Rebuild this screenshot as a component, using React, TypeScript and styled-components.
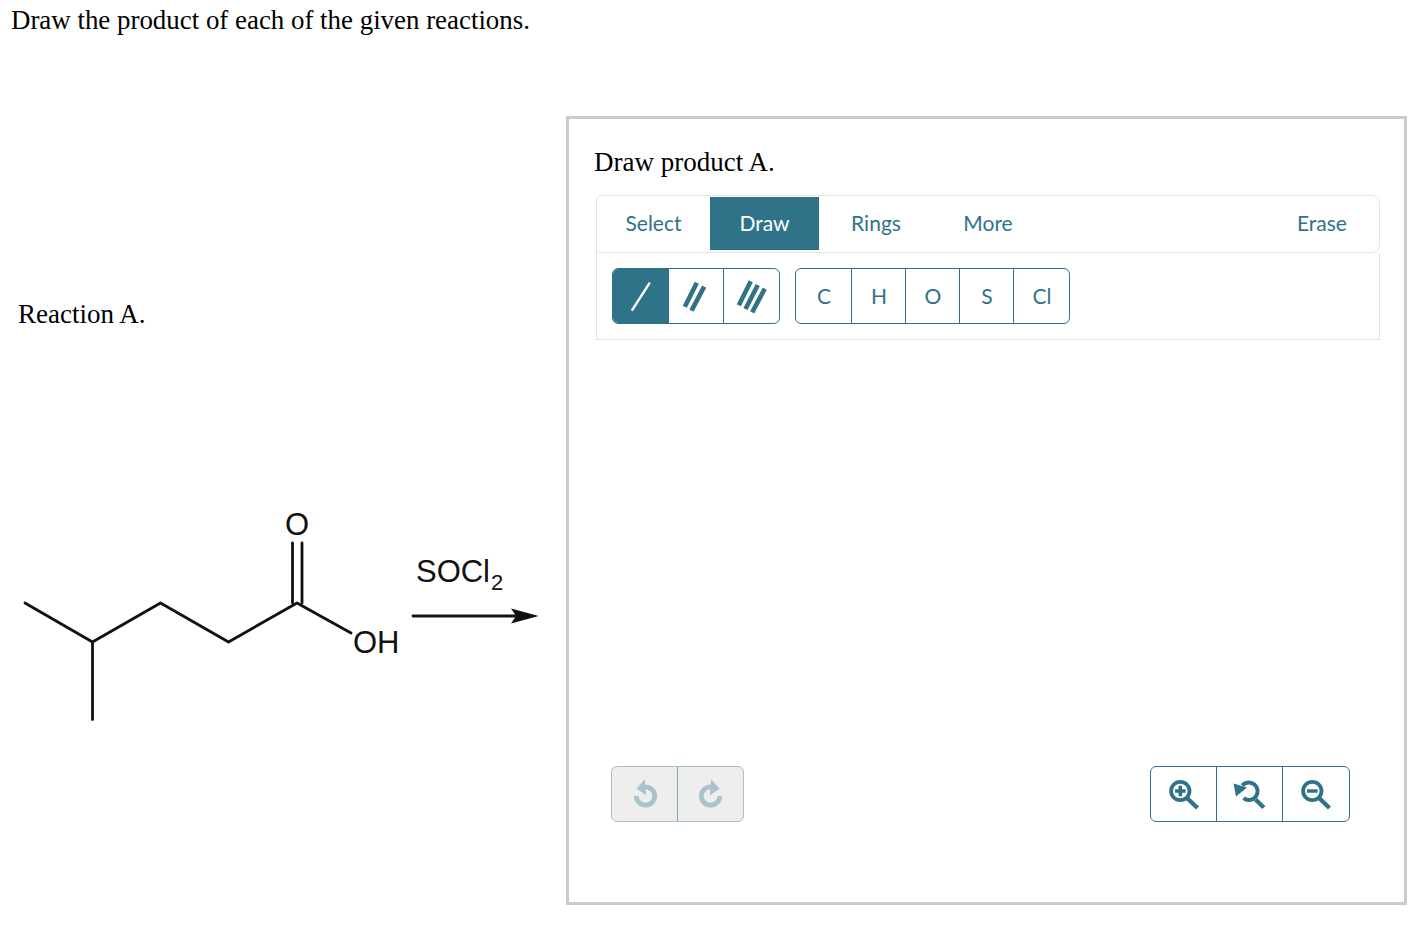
import styled, {createGlobalStyle} from 'styled-components';

const teal = '#2f7389';
const serif = '"Liberation Serif", "Times New Roman", serif';

const GlobalStyle = createGlobalStyle`
  html, body {
    margin: 0;
    padding: 0;
    background: #fff;
    color: #000;
    font-family: ${serif};
  }
`

const Page = styled.div`
  box-sizing: border-box;
  width: 1426px;
  height: 936px;
  padding-left: 11px;
  overflow: hidden;
`

const Heading = styled.div`
  height: 41px;
  line-height: 41px;
  font-size: 26.9px;
`

const Columns = styled.div`
  display: flex;
  margin-top: 75px;
`

const LeftColumn = styled.div`
  width: 555px;
  flex: none;
`

const ReactionLabel = styled.div`
  margin: 181px 0 0 7px;
  height: 34px;
  line-height: 35px;
  font-size: 27px;
`

const Drawing = styled.svg`
  display: block;
  margin-top: 169px;
`

const Panel = styled.div`
  box-sizing: border-box;
  width: 841px;
  height: 789px;
  border: 3px solid #cbcbcb;
  padding: 0 24px 0 27px;
`

const PanelTitle = styled.div`
  height: 76px;
  line-height: 87px;
  margin-left: -2px;
  font-size: 27px;
`

const TabBar = styled.div`
  box-sizing: border-box;
  display: flex;
  height: 58px;
  padding: 1px 0;
  border: 1px solid #e3e3e3;
  border-radius: 6px 8px 8px 0;
  font-family: Lato, sans-serif;
`

const Tab = styled.div<{$width: number; $active?: boolean; $push?: boolean}>`
  display: flex;
  align-items: center;
  justify-content: center;
  width: ${p => p.$width}px;
  margin-left: ${p => (p.$push ? 'auto' : 0)};
  margin-bottom: 1px;
  padding-bottom: 3px;
  box-sizing: border-box;
  font-size: 21px;
  color: ${p => (p.$active ? '#fff' : teal)};
  background: ${p => (p.$active ? teal : 'transparent')};
`

const ToolRow = styled.div`
  box-sizing: border-box;
  display: flex;
  gap: 15px;
  height: 87px;
  padding: 15px;
  border: 1px solid #e3e3e3;
  border-top: none;
`

const ButtonGroup = styled.div<{$muted?: boolean}>`
  display: flex;
  height: 56px;
  box-sizing: border-box;
  border: 1px solid ${p => (p.$muted ? '#a6c1ca' : teal)};
  border-radius: 6px;
  overflow: hidden;
  background: ${p => (p.$muted ? '#eeeeee' : '#fff')};
`

const BondButton = styled.div<{$active?: boolean}>`
  display: flex;
  align-items: center;
  justify-content: center;
  width: 55px;
  border-left: 1px solid ${teal};
  box-sizing: border-box;
  background: ${p => (p.$active ? teal : 'transparent')};

  &:first-child {
    border-left: none;
  }

  &:last-child {
    width: 56px;
  }
`

const ElementButton = styled.div`
  display: flex;
  align-items: center;
  justify-content: center;
  box-sizing: border-box;
  width: 54px;
  padding: 0 0 2px 1px;
  border-left: 1px solid ${teal};
  font-family: Lato, sans-serif;
  font-size: 21px;
  color: ${teal};

  &:first-child {
    width: 55px;
    border-left: none;
  }

  &:last-child {
    width: 56px;
  }
`

const Footer = styled.div`
  display: flex;
  justify-content: space-between;
  margin-top: 426px;
  padding: 0 30px 0 15px;
`

const IconButton = styled.div<{$muted?: boolean; $width: number}>`
  display: flex;
  align-items: center;
  justify-content: center;
  box-sizing: border-box;
  width: ${p => p.$width}px;
  border-left: 1px solid ${p => (p.$muted ? '#80a5b1' : teal)};

  &:first-child {
    border-left: none;
  }
`

const ChemText = styled.text`
  font-family: "Liberation Sans", Arial, sans-serif;
  fill: #111;
`

function ReactionDrawing() {
  return (
    <Drawing width="540" height="230" viewBox="11 500 540 230">
      <g fill="none" stroke="#111" strokeWidth="2.8" strokeLinecap="round" strokeLinejoin="round">
        <path d="M25 603 L92.500 642 L160.500 603 L228.500 642 L297 603 L351 633" />
        <path d="M92.500 642 V719.500" />
        <path d="M292.500 603 V543 M302 603 V543" />
        <path d="M413 616 H520" />
      </g>
      <path d="M511 608.500 L538.500 616 L511 623.500 L516 616 Z" fill="#111" />
      <ChemText x="285" y="535" fontSize="31">O</ChemText>
      <ChemText x="353" y="653" fontSize="31">OH</ChemText>
      <ChemText x="416" y="582" fontSize="31" textLength="74">SOCl</ChemText>
      <ChemText x="491" y="590" fontSize="22">2</ChemText>
    </Drawing>
  )
}

function BondIcon(props: {lines: string; color: string; width: number}) {
  return (
    <svg width="40" height="40" viewBox="0 0 40 40" fill="none">
      <path d={props.lines} stroke={props.color} strokeWidth={props.width} />
    </svg>
  )
}

function UndoIcon(props: {flip?: boolean}) {
  return (
    <svg
      width="32"
      height="32"
      viewBox="0 0 32 32"
      fill="none"
      style={props.flip ? {transform: 'scaleX(-1)'} : undefined}
    >
      <path d="M16 8.800 A9.200 9.200 0 1 1 7.300 18" stroke="#a9c2cb" strokeWidth="4.800" />
      <path d="M15.800 1.300 L7.500 10.700 L17.200 17.300 Z" fill="#a9c2cb" />
    </svg>
  )
}

function ZoomIcon(props: {kind: 'plus' | 'minus' | 'reset'}) {
  if (props.kind === 'reset') {
    return (
      <svg width="32" height="32" viewBox="0 0 32 32" fill="none" overflow="visible">
        <path d="M8.200 7.400 A8.800 8.800 0 1 1 9.500 20.200" stroke={teal} strokeWidth="4" />
        <path d="M21.500 21.500 L29.800 29.500" stroke={teal} strokeWidth="4.400" />
        <path d="M-0.500 5.500 L2 18.500 L13 9.500 Z" fill={teal} />
      </svg>
    )
  }
  return (
    <svg width="32" height="32" viewBox="0 0 32 32" fill="none">
      <circle cx="12.300" cy="13" r="9.200" stroke={teal} strokeWidth="3.800" />
      <path d="M19 20 L29.500 30" stroke={teal} strokeWidth="4.400" />
      <path
        d={props.kind === 'plus' ? 'M7 13 H17.600 M12.300 7.700 V18.300' : 'M7 13 H17.600'}
        stroke={teal}
        strokeWidth="3.600"
      />
    </svg>
  )
}

export default function App() {
  return (
    <Page>
      <GlobalStyle />
      <Heading>Draw the product of each of the given reactions.</Heading>
      <Columns>
        <LeftColumn>
          <ReactionLabel>Reaction A.</ReactionLabel>
          <ReactionDrawing />
        </LeftColumn>
        <Panel>
          <PanelTitle>Draw product A.</PanelTitle>
          <TabBar>
            <Tab $width={113}>Select</Tab>
            <Tab $width={109} $active>Draw</Tab>
            <Tab $width={114}>Rings</Tab>
            <Tab $width={110}>More</Tab>
            <Tab $width={114} $push>Erase</Tab>
          </TabBar>
          <ToolRow>
            <ButtonGroup>
              <BondButton $active>
                <BondIcon lines="M28.800 6.700 L10.800 34.700" color="#fff" width={2.400} />
              </BondButton>
              <BondButton>
                <BondIcon lines="M20.800 6.700 L8.800 30.700 M28.200 10.700 L15.500 34.700" color={teal} width={4.600} />
              </BondButton>
              <BondButton>
                <BondIcon lines="M18.800 5.300 L6.800 29.300 M25.800 9 L13.500 33 M32.800 12.700 L20.200 36.300" color={teal} width={4.600} />
              </BondButton>
            </ButtonGroup>
            <ButtonGroup>
              <ElementButton>C</ElementButton>
              <ElementButton>H</ElementButton>
              <ElementButton>O</ElementButton>
              <ElementButton>S</ElementButton>
              <ElementButton>Cl</ElementButton>
            </ButtonGroup>
          </ToolRow>
          <Footer>
            <ButtonGroup $muted>
              <IconButton $muted $width={65}><UndoIcon /></IconButton>
              <IconButton $muted $width={66}><UndoIcon flip /></IconButton>
            </ButtonGroup>
            <ButtonGroup>
              <IconButton $width={65}><ZoomIcon kind="plus" /></IconButton>
              <IconButton $width={66}><ZoomIcon kind="reset" /></IconButton>
              <IconButton $width={67}><ZoomIcon kind="minus" /></IconButton>
            </ButtonGroup>
          </Footer>
        </Panel>
      </Columns>
    </Page>
  )
}
